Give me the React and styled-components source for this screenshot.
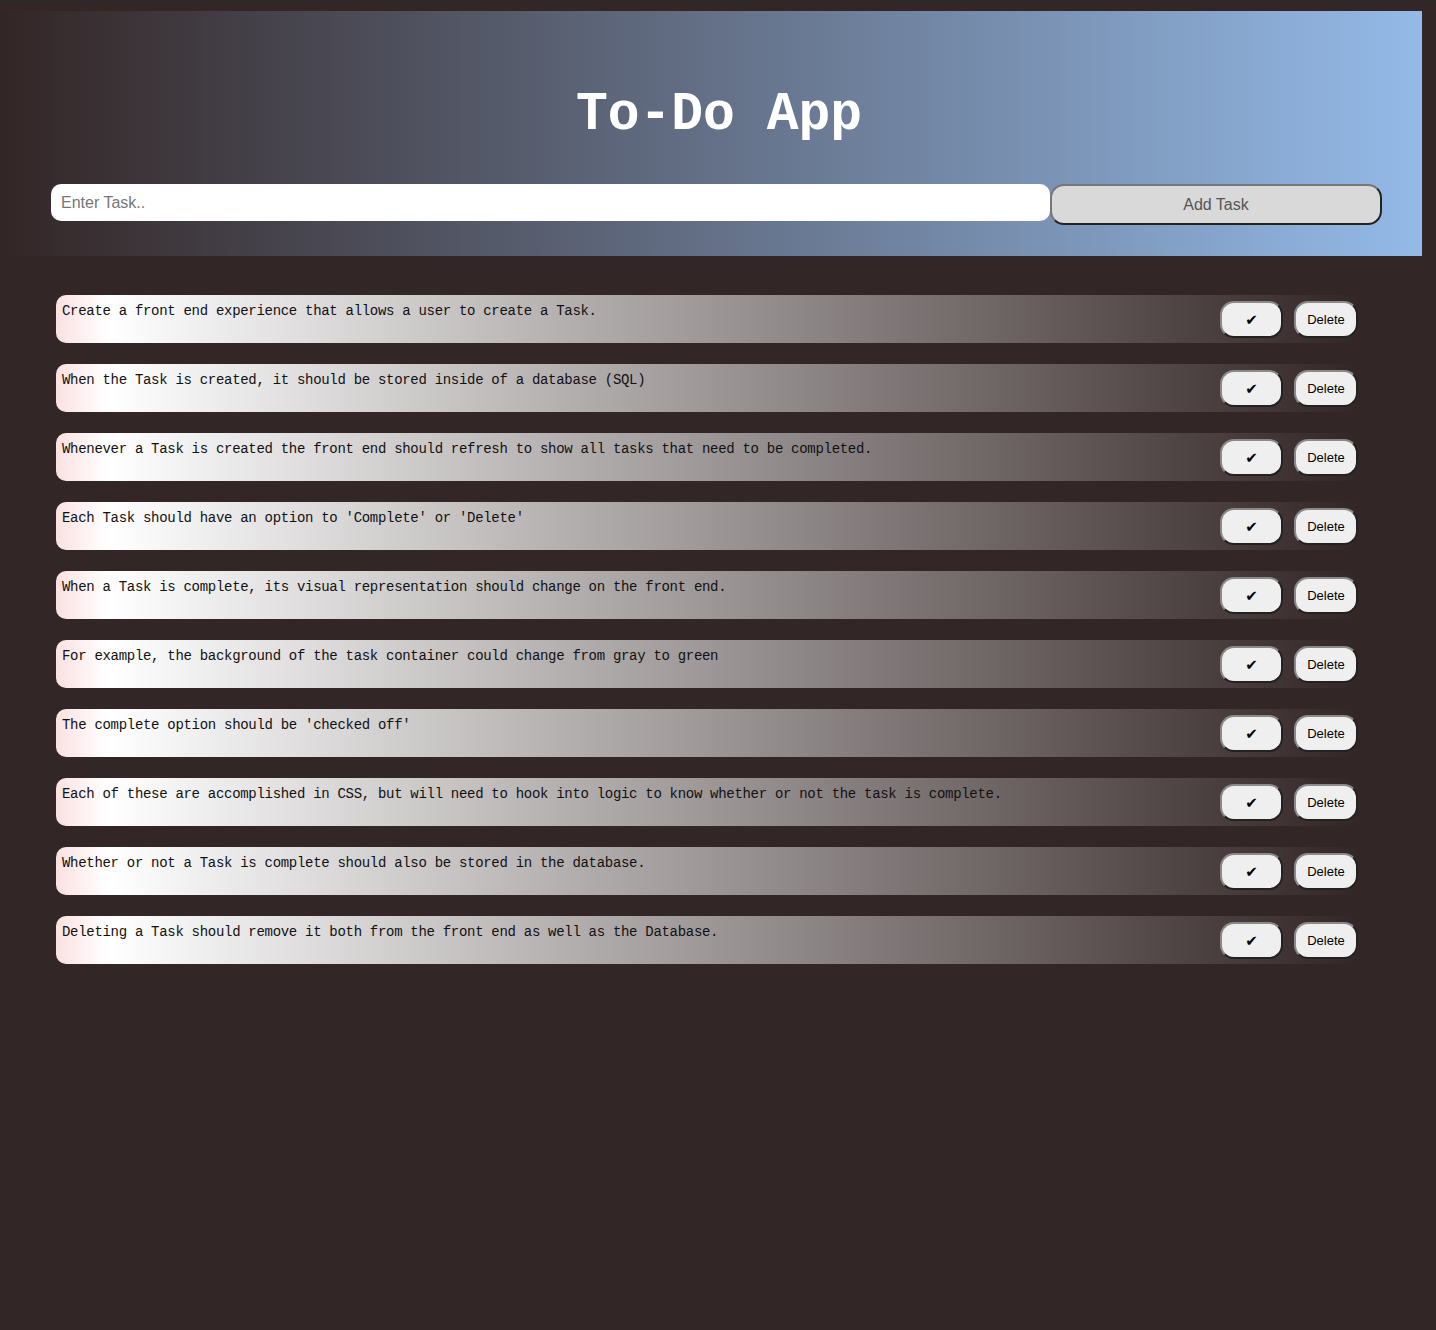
import React, { useState } from 'react'
import styled, { createGlobalStyle } from 'styled-components'

const GlobalStyle = createGlobalStyle`
  html, body {
    margin: 0;
    padding: 0;
    background: #332626;
  }
  body {
    min-height: 1330px;
    border-top: 2px solid #2c2b2b;
    box-sizing: border-box;
  }
`

const INITIAL_TASKS = [
  'Create a front end experience that allows a user to create a Task.',
  'When the Task is created, it should be stored inside of a database (SQL)',
  'Whenever a Task is created the front end should refresh to show all tasks that need to be completed.',
  "Each Task should have an option to 'Complete' or 'Delete'",
  'When a Task is complete, its visual representation should change on the front end.',
  'For example, the background of the task container could change from gray to green',
  "The complete option should be 'checked off'",
  'Each of these are accomplished in CSS, but will need to hook into logic to know whether or not the task is complete.',
  'Whether or not a Task is complete should also be stored in the database.',
  'Deleting a Task should remove it both from the front end as well as the Database.',
]

const Page = styled.div`
  padding-top: 9px;
`

const Header = styled.header`
  width: 1422px;
  height: 245px;
  box-sizing: border-box;
  background: linear-gradient(to right, #332626, #94bae8);
  display: flex;
  flex-direction: column;
`

const Title = styled.h1`
  margin: 0;
  padding: 72px 0 0 16px;
  height: 173px;
  box-sizing: border-box;
  text-align: center;
  font-family: 'Courier New', 'Liberation Mono', monospace;
  font-weight: bold;
  font-size: 53px;
  line-height: 64px;
  color: #fff;
`

const Form = styled.div`
  display: flex;
  align-items: flex-start;
  padding-left: 51px;
`

const TaskInput = styled.input`
  width: 999px;
  height: 37px;
  box-sizing: border-box;
  border: none;
  border-radius: 10px;
  padding: 0 10px;
  font-family: 'Liberation Sans', Arial, sans-serif;
  font-size: 16px;
  background: #fff;
  outline: none;
  &::placeholder {
    color: #777;
  }
`

const AddButton = styled.button`
  width: 332px;
  height: 41px;
  box-sizing: border-box;
  background: #d9d9d9;
  border: 2px solid;
  border-color: #777 #222 #222 #777;
  border-radius: 14px;
  font-family: 'Liberation Sans', Arial, sans-serif;
  font-size: 16px;
  color: #555;
  padding: 0;
  cursor: pointer;
`

const List = styled.ul`
  list-style: none;
  margin: 0;
  padding: 39px 0 0 56px;
  display: flex;
  flex-direction: column;
  gap: 21px;
`

const Row = styled.li`
  width: 1302px;
  height: 48px;
  box-sizing: border-box;
  display: flex;
  align-items: flex-start;
  border-radius: 10px;
  background: ${(props) =>
    props.done
      ? 'linear-gradient(to right, #e3fbe3, #ffffff 4%, #2f5a2f 100%)'
      : 'linear-gradient(to right, #fbe1e1, #ffffff 4%, #332626 100%)'};
`

const TaskText = styled.span`
  flex: 1;
  padding: 6px 0 0 6px;
  font-family: 'Courier New', 'Liberation Mono', monospace;
  font-size: 14px;
  letter-spacing: -0.3px;
  line-height: 20px;
  color: #111;
  white-space: nowrap;
  text-decoration: ${(props) => (props.done ? 'line-through' : 'none')};
`

const Actions = styled.div`
  display: flex;
  gap: 11px;
  padding-top: 6px;
`

const RowButton = styled.button`
  width: ${(props) => props.width}px;
  height: 37px;
  box-sizing: border-box;
  background: #efefef;
  border: 2px solid;
  border-color: #8a8a8a #222 #222 #8a8a8a;
  border-radius: 14px;
  font-family: 'Liberation Sans', Arial, sans-serif;
  font-size: 13px;
  color: #000;
  padding: 0;
  cursor: pointer;
`

const Check = styled.span`
  font-family: 'DejaVu Sans', sans-serif;
  font-size: 15px;
  font-weight: bold;
`

const App = () => {
  const [tasks, setTasks] = useState(
    INITIAL_TASKS.map((text, i) => ({ id: i, text, done: false }))
  )
  const [value, setValue] = useState('')

  const addTask = () => {
    if (!value.trim()) return
    setTasks([...tasks, { id: Date.now(), text: value, done: false }])
    setValue('')
  }
  const toggle = (id) => {
    setTasks(tasks.map((t) => (t.id === id ? { ...t, done: !t.done } : t)))
  }
  const remove = (id) => {
    setTasks(tasks.filter((t) => t.id !== id))
  }

  return (
    <Page>
      <GlobalStyle />
      <Header>
        <Title>To-Do App</Title>
        <Form>
          <TaskInput
            placeholder="Enter Task.."
            value={value}
            onChange={(e) => setValue(e.target.value)}
          />
          <AddButton onClick={addTask}>Add Task</AddButton>
        </Form>
      </Header>
      <List>
        {tasks.map((task) => (
          <Row key={task.id} done={task.done}>
            <TaskText done={task.done}>{task.text}</TaskText>
            <Actions>
              <RowButton width={63} onClick={() => toggle(task.id)}>
                <Check>✔</Check>
              </RowButton>
              <RowButton width={64} onClick={() => remove(task.id)}>
                Delete
              </RowButton>
            </Actions>
          </Row>
        ))}
      </List>
    </Page>
  )
}

export default App
